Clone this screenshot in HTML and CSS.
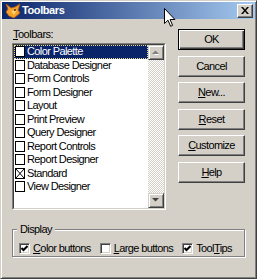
FILE: index.html
```html
<!DOCTYPE html>
<html>
<head>
<meta charset="utf-8">
<link rel="stylesheet" href="styles.css">
</head>
<body>
<div class="window">
  <div class="titlebar">
    <svg class="appicon" viewBox="0 0 16 16" width="16" height="16">
      <polygon points="1,1 6,5 10,4 15,1 13,7 15,10 9,15 4,13 1,9 3,6" fill="#f3a12a" stroke="#b85a10" stroke-width="0.8"/>
      <polygon points="6,8 12,7 9,12" fill="#ffd070"/>
      <circle cx="10" cy="7" r="0.9" fill="#402000"/>
    </svg>
    <span class="title">Toolbars</span>
    <div class="close">
      <svg viewBox="0 0 8 7" width="8" height="7"><path d="M0 0h2l2 2.5 2-2.5h2l-3 3.5 3 3.5h-2l-2-2.5-2 2.5h-2l3-3.5z" fill="#000"/></svg>
    </div>
  </div>
  <div class="content">
    <div class="toprow">
      <div class="listcol">
        <div class="label"><u>T</u>oolbars:</div>
        <div class="listbox">
          <div class="listinner">
            <ul class="items">
              <li class="sel"><span class="cb"></span><span class="txt">Color Palette</span></li>
              <li><span class="cb"></span><span class="txt">Database Designer</span></li>
              <li><span class="cb"></span><span class="txt">Form Controls</span></li>
              <li><span class="cb"></span><span class="txt">Form Designer</span></li>
              <li><span class="cb"></span><span class="txt">Layout</span></li>
              <li><span class="cb"></span><span class="txt">Print Preview</span></li>
              <li><span class="cb"></span><span class="txt">Query Designer</span></li>
              <li><span class="cb"></span><span class="txt">Report Controls</span></li>
              <li><span class="cb"></span><span class="txt">Report Designer</span></li>
              <li><span class="cb checked"><svg viewBox="0 0 8 9" width="8" height="9"><path d="M0 0L8 9M8 0L0 9" stroke="#000" stroke-width="1"/></svg></span><span class="txt">Standard</span></li>
              <li><span class="cb"></span><span class="txt">View Designer</span></li>
            </ul>
            <div class="scrollbar">
              <div class="sbtn"><svg viewBox="0 0 8 5" width="8" height="5"><path d="M1 4h5L3.5 1.5z" fill="#fff" transform="translate(1,1)"/><path d="M0 4h7L3.5 0.5z" fill="#808080"/></svg></div>
              <div class="track"></div>
              <div class="sbtn"><svg viewBox="0 0 8 5" width="8" height="5"><path d="M0 0h7L3.5 3.5z" fill="#404040"/></svg></div>
            </div>
          </div>
        </div>
      </div>
      <div class="buttons">
        <div class="btn default">OK</div>
        <div class="btn">Cancel</div>
        <div class="btn"><u>N</u>ew...</div>
        <div class="btn"><u>R</u>eset</div>
        <div class="btn"><u>C</u>ustomize</div>
        <div class="btn"><u>H</u>elp</div>
      </div>
    </div>
    <div class="group">
      <div class="group-title">Display</div>
      <div class="checks">
        <div class="chk"><span class="box"><svg viewBox="0 0 7 7" width="7" height="7"><path d="M0.5 3l2 2 4-4" stroke="#000" stroke-width="2" fill="none"/></svg></span><span class="txt"><u>C</u>olor buttons</span></div>
        <div class="chk"><span class="box"></span><span class="txt"><u>L</u>arge buttons</span></div>
        <div class="chk"><span class="box"><svg viewBox="0 0 7 7" width="7" height="7"><path d="M0.5 3l2 2 4-4" stroke="#000" stroke-width="2" fill="none"/></svg></span><span class="txt">Tool<u>T</u>ips</span></div>
      </div>
    </div>
  </div>
</div>
<svg class="cursor" viewBox="0 0 12 19" width="12" height="19">
  <path d="M0.5 0.5V15.5L4 12.2L6.6 18.3L8.6 17.4L6.1 11.5H10.9Z" fill="#fff" stroke="#000" stroke-width="1"/>
</svg>
</body>
</html>
```
FILE: styles.css
```css
* { box-sizing: border-box; }
html, body { margin: 0; padding: 0; }
body {
  width: 257px;
  height: 279px;
  background: #d4d0c8;
  font-family: "Liberation Sans", Arial, sans-serif;
  font-size: 11px;
  line-height: 13px;
  color: #000;
  overflow: hidden;
  position: relative;
}
.window {
  width: 257px;
  height: 279px;
  border: 1px solid;
  border-color: #d4d0c8 #404040 #404040 #d4d0c8;
  box-shadow: inset 1px 1px #fff, inset -1px -1px #808080;
  padding: 1px;
  display: flex;
  flex-direction: column;
}
.titlebar {
  height: 17px;
  flex: none;
  background: linear-gradient(to right, #0a246a, #a6caf0);
  display: flex;
  align-items: center;
  padding: 0 2px 0 3px;
  color: #fff;
}
.appicon { flex: none; display: block; }
.title {
  flex: 1;
  font-weight: bold;
  font-size: 11px;
  letter-spacing: -0.4px;
  margin-left: 1px;
  white-space: nowrap;
}
.close {
  width: 16px;
  height: 14px;
  flex: none;
  background: #d4d0c8;
  border: 1px solid;
  border-color: #fff #404040 #404040 #fff;
  box-shadow: inset -1px -1px #808080;
  display: flex;
  align-items: center;
  justify-content: center;
}
.close svg { display: block; }
.content {
  flex: 1;
  padding: 9px 10px 0 10px;
}
.toprow {
  display: flex;
  gap: 12px;
}
.listcol { width: 154px; flex: none; }
.label {
  height: 13px;
  margin-bottom: 2px;
  padding-left: 1px;
  letter-spacing: -0.5px;
}
.listbox {
  height: 167px;
  border: 1px solid;
  border-color: #808080 #fff #fff #808080;
}
.listinner {
  height: 100%;
  border: 1px solid;
  border-color: #404040 #d4d0c8 #d4d0c8 #404040;
  background: #fff;
  display: flex;
}
.items {
  flex: 1;
  list-style: none;
  margin: 0;
  padding: 0;
}
.items li {
  height: 13.5px;
  display: flex;
  align-items: center;
  white-space: nowrap;
}
.items li.sel {
  background: #0a246a;
  color: #fff;
  outline: 1px dotted #e8dc8a;
  outline-offset: -1px;
}
.cb {
  width: 10px;
  height: 11px;
  flex: none;
  border: 1px solid #000;
  background: #fff;
  margin: 0 2px 0 1px;
  display: flex;
  align-items: center;
  justify-content: center;
}
.cb svg { display: block; }
.txt { letter-spacing: -0.6px; white-space: nowrap; }
.scrollbar {
  width: 16px;
  flex: none;
  display: flex;
  flex-direction: column;
}
.sbtn {
  height: 15px;
  flex: none;
  background: #d4d0c8;
  border: 1px solid;
  border-color: #d4d0c8 #404040 #404040 #d4d0c8;
  box-shadow: inset 1px 1px #fff, inset -1px -1px #808080;
  display: flex;
  align-items: center;
  justify-content: center;
}
.sbtn svg { display: block; }
.track {
  flex: 1;
  background: repeating-conic-gradient(#d4d0c8 0% 25%, #fff 0% 50%) 0 0 / 2px 2px;
}
.buttons {
  width: 67px;
  flex: none;
  display: flex;
  flex-direction: column;
  gap: 5.6px;
  margin-top: 1px;
}
.btn {
  height: 21px;
  background: #d4d0c8;
  border: 1px solid;
  border-color: #fff #404040 #404040 #fff;
  box-shadow: inset -1px -1px #808080;
  display: flex;
  align-items: center;
  justify-content: center;
  letter-spacing: -0.6px;
  white-space: nowrap;
}
.btn.default {
  border-color: #000;
  box-shadow: inset 1px 1px #fff, inset -1px -1px #404040, inset -2px -2px #808080;
}
.group {
  margin-top: 19px;
  border: 1px solid #808080;
  box-shadow: 1px 1px #fff, inset 1px 1px #fff;
  padding: 0 6px 1px 6px;
}
.group-title {
  width: fit-content;
  margin: -7px 0 0 -2px;
  padding: 0 3px;
  background: #d4d0c8;
  letter-spacing: -0.6px;
}
.checks {
  display: flex;
  align-items: center;
  gap: 9px;
  margin-top: 6px;
  height: 13px;
}
.chk {
  display: flex;
  align-items: center;
  gap: 3px;
}
.box {
  width: 11px;
  height: 11px;
  flex: none;
  border: 1px solid;
  border-color: #808080 #fff #fff #808080;
  box-shadow: inset 1px 1px #404040, inset -1px -1px #d4d0c8;
  background: #fff;
  display: flex;
  align-items: center;
  justify-content: center;
}
.box svg { display: block; }
.cursor {
  position: absolute;
  left: 164px;
  top: 8px;
  display: block;
}
```
